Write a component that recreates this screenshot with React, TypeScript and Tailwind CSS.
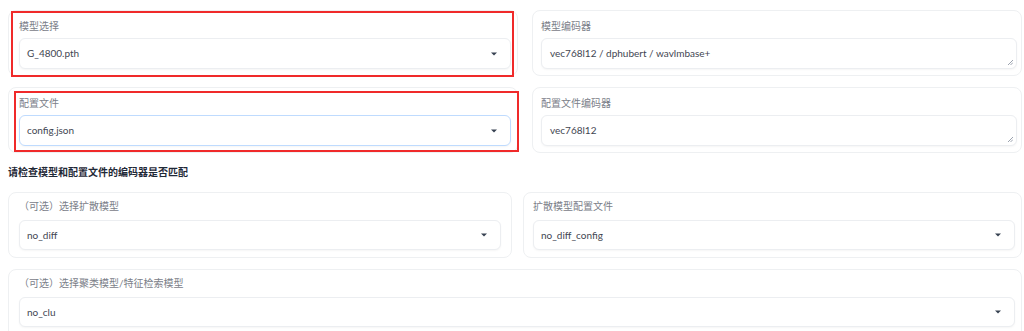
import React from "react";

const font = { fontFamily: '"Lato", "Noto Sans CJK SC", sans-serif' };

function Caret() {
  return (
    <svg width="6" height="4" viewBox="0 0 6 4" className="shrink-0">
      <path d="M0 0.5 L6 0.5 L3 3.5 Z" fill="#374151" />
    </svg>
  );
}

function Resize() {
  return (
    <svg width="6" height="6" viewBox="0 0 6 6" className="absolute right-[3px] bottom-[3px]">
      <path d="M1 6 L6 1 M3.5 6 L6 3.5" stroke="#9ca3af" strokeWidth="1" />
    </svg>
  );
}

function Dropdown({ value, focused = false, h = "h-[31px]" }: { value: string; focused?: boolean; h?: string }) {
  return (
    <div
      className={`flex items-center justify-between ${h} rounded-md border bg-white pl-[7px] pr-[13px] text-[10px] text-[#3f4652] shadow-[0_1px_2px_rgba(0,0,0,0.04)] ${
        focused ? "border-[#bfdbfe]" : "border-[#eceef1]"
      }`}
    >
      <span>{value}</span>
      <Caret />
    </div>
  );
}

function TextBox({ value }: { value: string }) {
  return (
    <div className="relative h-[31px] rounded-md border border-[#eceef1] bg-white pl-[8px] pt-[7px] text-[10px] text-[#3f4652] shadow-[0_1px_2px_rgba(0,0,0,0.04)]">
      {value}
      <Resize />
    </div>
  );
}

function Label({ children }: { children: React.ReactNode }) {
  return <div className="h-[14px] text-[10px] leading-[14px] text-[#7b8089]">{children}</div>;
}

function Card({ children, className = "" }: { children: React.ReactNode; className?: string }) {
  return (
    <div className={`relative rounded-lg border border-[#eef0f2] bg-white ${className}`}>{children}</div>
  );
}

export default function App() {
  return (
    <div className="h-[331px] w-[1024px] overflow-hidden bg-white" style={font}>
      <div className="pl-[8px] pr-[2px] pt-[10px]">
        <div className="grid grid-cols-[510px_1fr] gap-x-[14px] gap-y-[11px]">
          <Card className="h-[66px] pl-[10px] pr-[6px] pt-[8px]">
            <Label>模型选择</Label>
            <div className="mt-[5px]">
              <Dropdown value="G_4800.pth" />
            </div>
            <div className="pointer-events-none absolute left-[2px] top-[0px] h-[66px] w-[503px] border-2 border-[#f02a2a]" />
          </Card>
          <Card className="h-[66px] pl-[8px] pr-[4px] pt-[8px]">
            <Label>模型编码器</Label>
            <div className="mt-[5px]">
              <TextBox value="vec768l12 / dphubert / wavlmbase+" />
            </div>
          </Card>
          <Card className="h-[66px] pl-[10px] pr-[6px] pt-[8px]">
            <Label>配置文件</Label>
            <div className="mt-[5px]">
              <Dropdown value="config.json" focused />
            </div>
            <div className="pointer-events-none absolute left-[5px] top-[3px] h-[61px] w-[505px] border-2 border-[#f02a2a]" />
          </Card>
          <Card className="h-[66px] pl-[8px] pr-[4px] pt-[8px]">
            <Label>配置文件编码器</Label>
            <div className="mt-[5px]">
              <TextBox value="vec768l12" />
            </div>
          </Card>
        </div>

        <div className="mt-[12px] text-[10px] font-bold leading-[14px] text-[#1f2937]">
          请检查模型和配置文件的编码器是否匹配
        </div>

        <div className="mt-[13px] grid grid-cols-[504px_1fr] gap-x-[11px]">
          <Card className="h-[66px] px-[10px] pt-[6px]">
            <Label>（可选）选择扩散模型</Label>
            <div className="mt-[7px]">
              <Dropdown value="no_diff" h="h-[30px]" />
            </div>
          </Card>
          <Card className="h-[66px] pl-[9px] pr-[6px] pt-[6px]">
            <Label>扩散模型配置文件</Label>
            <div className="mt-[7px]">
              <Dropdown value="no_diff_config" h="h-[30px]" />
            </div>
          </Card>
        </div>

        <Card className="mt-[11px] h-[70px] pl-[10px] pr-[6px] pt-[6px]">
          <Label>（可选）选择聚类模型/特征检索模型</Label>
          <div className="mt-[7px]">
            <Dropdown value="no_clu" h="h-[30px]" />
          </div>
        </Card>
      </div>
    </div>
  );
}
